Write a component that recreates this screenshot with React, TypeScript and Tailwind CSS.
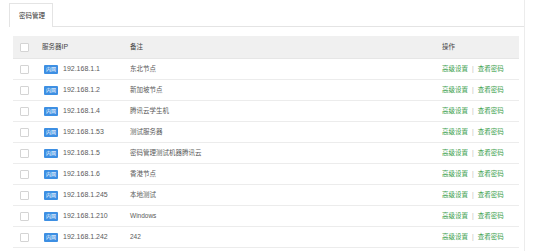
import React from "react";

const rows = [
  ["192.168.1.1", "东北节点"],
  ["192.168.1.2", "新加坡节点"],
  ["192.168.1.4", "腾讯云学生机"],
  ["192.168.1.53", "测试服务器"],
  ["192.168.1.5", "密码管理测试机器腾讯云"],
  ["192.168.1.6", "香港节点"],
  ["192.168.1.245", "本地测试"],
  ["192.168.1.210", "Windows"],
  ["192.168.1.242", "242"],
];

function Box() {
  return <div className="w-[9px] h-[9px] border border-[#d4d4d4] rounded-[1px] bg-white" />;
}

export default function App() {
  return (
    <div
      className="w-[525px] h-[251px] bg-white border-r border-[#ececec] text-[7px] text-[#5a5a5a]"
      style={{ fontFamily: '"Liberation Sans", "Noto Sans CJK SC", sans-serif' }}
    >
      <div className="flex pt-[3px] pl-[9px]">
        <div className="h-[24px] w-[44px] border border-b-0 border-[#e4e4e4] flex items-center pl-[9px] text-[#333] text-[6.5px] bg-white">
          密码管理
        </div>
        <div className="flex-1 border-b border-[#e4e4e4]" />
      </div>
      <div className="ml-[13px] w-[506px] mt-[9px]">
        <div className="flex h-[23px] items-center bg-[#f0f0f0] border-b border-[#e6e6e6] text-[#444] text-[6.5px]">
          <div className="w-[29px] pl-[7px]"><Box /></div>
          <div className="w-[88px] text-[7px]">
            <span className="text-[6.5px]">服务器</span>IP
          </div>
          <div className="w-[312px]">备注</div>
          <div className="w-[77px]">操作</div>
        </div>
        {rows.map(([ip, note]) => (
          <div key={ip} className="flex h-[21px] items-center border-b border-[#ececec]">
            <div className="w-[29px] pl-[7px]"><Box /></div>
            <div className="w-[88px] flex items-center">
              <span className="ml-[2px] w-[14px] h-[9px] bg-[#3d8fe3] text-white text-[5px] leading-[9px] flex items-center justify-center rounded-[1px]">
                内网
              </span>
              <span className="ml-[5px]">{ip}</span>
            </div>
            <div className="w-[312px] text-[6.5px]">{note}</div>
            <div className="w-[77px] flex items-center text-[#3a9e4c] text-[6.5px]">
              <span>高级设置</span>
              <span className="mx-[4px] text-[#bbb]">|</span>
              <span>查看密码</span>
            </div>
          </div>
        ))}
      </div>
    </div>
  );
}
